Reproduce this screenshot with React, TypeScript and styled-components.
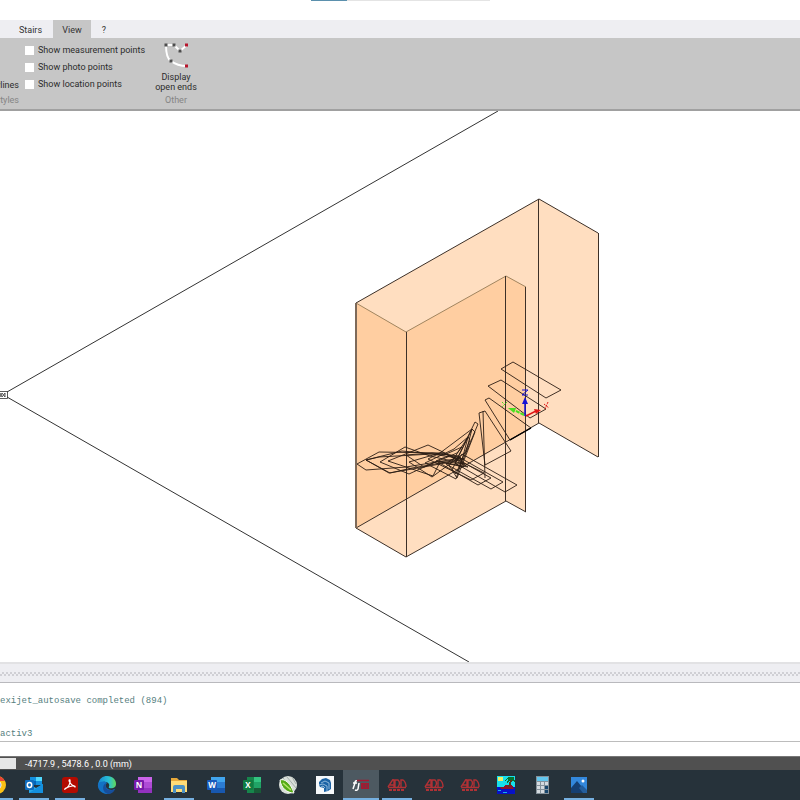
import React from 'react';
import styled, { createGlobalStyle } from 'styled-components';

const GlobalStyle = createGlobalStyle`
  * { box-sizing: border-box; }
  body { margin: 0; background: #fff; font-family: Roboto, "Open Sans", sans-serif; }
`;

const Page = styled.div`
  display: flex;
  flex-direction: column;
  min-height: 100vh;
  overflow: hidden;
`;

const TopStrip = styled.div`
  display: flex;
  height: 20px;
  padding-left: 311px;
`;

const Segment = styled.div<{ $active?: boolean }>`
  flex: none;
  width: ${p => (p.$active ? 36 : 143)}px;
  height: 1px;
  background: ${p => (p.$active ? '#5b90ad' : '#e4e4e4')};
`;

const Tabs = styled.nav`
  display: flex;
  height: 18px;
  padding-left: 8px;
  background: #eeeef2;
`;

const Tab = styled.button<{ $active?: boolean }>`
  border: 0;
  padding: 2px 0 0;
  width: ${p => (p.$active ? 38 : 45)}px;
  background: ${p => (p.$active ? '#c6c6c6' : 'transparent')};
  color: #333;
  font: 9px/16px Roboto, sans-serif;
`;

const HelpTab = styled(Tab)`
  width: 26px;
`;

const Ribbon = styled.section`
  display: flex;
  height: 73px;
  background: #c6c6c6;
  border-bottom: 2px solid #a0a0a0;
`;

const StyleGroup = styled.div`
  display: flex;
  flex-direction: column;
  width: 150px;
  padding-top: 4px;
`;

const OptionRow = styled.div`
  display: flex;
  align-items: center;
  height: 17px;
  color: #2c2c2c;
`;

const Clipped = styled.span`
  display: flex;
  flex: none;
  justify-content: flex-end;
  width: 19px;
  margin-right: 6px;
  white-space: nowrap;
  font-size: 9px;
`;

const Option = styled.label`
  display: flex;
  align-items: center;
  gap: 4px;
  font-size: 9px;
  line-height: 17px;
  white-space: nowrap;
`;

const Check = styled.input`
  appearance: none;
  width: 9px;
  height: 9px;
  margin: 0;
  background: #fff;
  &:checked { background: #4596cb; }
`;

const GroupName = styled.div`
  display: flex;
  font-size: 9px;
  line-height: 15px;
  color: #858585;
`;

const OtherGroup = styled.div`
  display: flex;
  flex-direction: column;
  align-items: center;
  width: 52px;
  padding-top: 4px;
`;

const ToolButton = styled.button`
  display: flex;
  flex-direction: column;
  align-items: center;
  height: 51px;
  border: 0;
  padding: 0;
  background: transparent;
  font: 9px/10px Roboto, sans-serif;
  color: #2c2c2c;
  white-space: nowrap;
`;

const Viewport = styled.main`
  display: flex;
  flex: 1 0 551px;
  height: 551px;
  background: #fff;
  svg { display: block; width: 100%; height: 100%; }
`;

const Splitter = styled.div`
  height: 21px;
  padding: 8px 0;
  background: #eeeef2;
  border-top: 2px solid #e2e2e4;
  border-bottom: 1px solid #b9b9bd;
`;

const Grip = styled.div`
  height: 4px;
  background-image:
    conic-gradient(#d0d0d5 25%, transparent 0 50%, #d0d0d5 0 75%, transparent 0);
  background-size: 4px 4px;
`;

const Console = styled.section`
  display: flex;
  flex-direction: column;
  gap: 22px;
  height: 59px;
  padding-top: 13px;
  border-bottom: 1px solid #bcbcbc;
  font: 9px/11px "Liberation Mono", monospace;
  color: #568080;
`;

const CommandInput = styled.input`
  width: 100%;
  height: 14px;
  border: 0;
  padding: 0 4px;
  background: #fff;
  font: 9px/11px "Liberation Mono", monospace;
  outline: none;
`;

const StatusBar = styled.footer`
  display: flex;
  align-items: center;
  gap: 9px;
  height: 14px;
  background: #505050;
  border-top: 1px solid #777;
  font-size: 9px;
  line-height: 12px;
  color: #fff;
`;

const StatusField = styled.div`
  width: 16px;
  height: 11px;
  background: #e6e6e6;
`;

const Taskbar = styled.nav`
  height: 30px;
  overflow: hidden;
  background: #26323a;
`;

const TaskList = styled.div`
  display: grid;
  grid-template-columns: 16px repeat(16, 1fr);
  width: 597px;
  height: 30px;
`;

const TaskButton = styled.button<{ $open?: boolean; $active?: boolean }>`
  display: flex;
  justify-content: center;
  min-width: 0;
  padding: 5px 0 0;
  border: 0;
  background:
    linear-gradient(${p => (p.$open ? '#76b0e0, #76b0e0' : 'transparent, transparent')})
    center bottom / ${p => (p.$active ? '100%' : '30px')} 2px no-repeat
    ${p => (p.$active ? '#4d5961' : 'transparent')};
  svg { flex: none; display: block; width: 20px; height: 20px; }
`;

const EdgeTaskButton = styled(TaskButton)`
  justify-content: flex-end;
  padding-right: 9px;
  background-position: -17px bottom;
`;

function OpenEndsIcon() {
  return (
    <svg width="28" height="30" viewBox="0 0 28 30" aria-hidden="true">
      <path d="M4 3C4 12 5 17 9 19C14 23 19 24 25 24M4 3H12L18 9L25 3" fill="none" stroke="#fff" strokeWidth="2" />
      {[[4, 3], [12, 3], [18, 9], [9, 19]].map(([x, y]) => (
        <rect key={x} x={x - 1.5} y={y - 1.5} width="3" height="3" fill="#4d4d4d" />
      ))}
      <rect x="23" y="1.500" width="3" height="3" fill="#b7152c" />
      <rect x="23" y="22.500" width="3" height="3" fill="#b7152c" />
    </svg>
  );
}

const walls = [
  '356,303 539,199 539,423 356,528',
  '539,199 598,233 598,457 539,423',
  '356,303 406,332 406,557 356,528',
  '406,332 506,276 506,501 406,557',
  '506,276 526,287 526,512 506,501',
];

const treads = [
  '501,369 513,362 561,390 546,398',
  '488,386 501,380 546,409 530,418',
  '485,400 489,398 531,428 510,440',
  '479,413 485,411 511,451 485,465',
  '475,422 478,424 460,467 455,463',
  '472,429 475,432 457,478 452,470',
  '468,437 470,440 456,474 449,466',
  '357,464 366,470 406,467 461,458 440,453 379,452',
  '366,460 390,473 412,468 464,459 432,454 379,457',
  '380,462 405,447 430,456 465,464 437,461 409,474',
  '388,461 428,445 445,453 468,467 440,462 433,476',
  '409,462 440,453 472,429 466,452 432,477',
  '425,463 454,449 468,437 463,456 456,479',
  '366,460 402,451 444,455 462,447 457,453 424,467 389,473',
  '406,455 432,453 459,456 464,467 445,463 424,467',
  '462,454 517,485 505,492 455,463',
  '457,456 503,482 491,489 446,464',
  '450,455 491,478 478,485 436,461',
  '442,452 484,473 471,480 428,459',
];

function Drawing() {
  return (
    <svg viewBox="0 111 800 551" preserveAspectRatio="xMidYMid slice" role="img" aria-label="3D stair model">
      <g fill="none" stroke="#333" strokeWidth="1">
        <path d="M498 111L7 392M7 397L469 662" />
        <path d="M-1 391.500H7.500V398.500H-1M0 393L2 397L5 393V397L2 393L0 397" strokeWidth=".8" />
      </g>
      <g fill="#ffbe82" fillOpacity=".5" stroke="none">
        {walls.map(p => <polygon key={p} points={p} />)}
      </g>
      <g fill="none" strokeWidth="1">
        <path d="M356 303L406 332L506 276L526 287" stroke="#a1855f" />
        <path d="M356 303L539 199L598 233M598 457L539 423L356 528L406 557L506 501L526 512" stroke="#3c3028" />
        <path d="M598.500 233V457M538.500 199V423M525.500 287V512M505.500 276V501M406.500 332V557" stroke="#3c3028" />
        <path d="M356 303V528" stroke="#7d6a5a" strokeWidth="2" />
      </g>
      <g fill="none" stroke="#2b1d14" strokeWidth=".9">
        {treads.map(p => <polygon key={p} points={p} />)}
        <path d="M483 411L485 478" />
        <path d="M510 440L531 428" stroke="#000" strokeWidth="1.200" />
      </g>
      <g fill="none" strokeWidth="1.500">
        <path d="M525 416V402" stroke="#1511d6" />
        <path d="M525 397L522 404H528Z" fill="#1511d6" stroke="none" />
        <path d="M522 390H528L522 395H528" stroke="#1511d6" strokeWidth="1" />
        <path d="M526 416L536 411" stroke="#e11616" />
        <path d="M541 410L534 409L536 414Z" fill="#e11616" stroke="none" />
        <path d="M544 404L549 408M548 402L545 409" stroke="#e11616" strokeWidth="1" strokeDasharray="2 1" />
        <path d="M524 415L512 409" stroke="#48df20" strokeWidth="2" strokeDasharray="4 1" />
        <path d="M508 408L516 408L514 413Z" fill="#48df20" stroke="none" />
        <path d="M502 402L505 405M507 402L502 407" stroke="#48df20" strokeWidth="1" strokeDasharray="2 1" />
      </g>
    </svg>
  );
}

function Chrome() {
  return (
    <svg viewBox="0 0 20 20" aria-hidden="true">
      <circle cx="10" cy="10" r="9" fill="#fbc116" />
      <path d="M2.200 5.500A9 9 0 0 1 18 6H10L6 12Z" fill="#e84335" />
      <path d="M2.200 5.500L7 13L11 14L9 19A9 9 0 0 1 2.200 5.500Z" fill="#34a853" />
      <circle cx="10" cy="10" r="4.500" fill="#fff" />
      <circle cx="10" cy="10" r="3.500" fill="#4285f4" />
    </svg>
  );
}

function Outlook() {
  return (
    <svg viewBox="0 0 20 20" aria-hidden="true">
      <path d="M6 2H18V10H6Z" fill="#1490df" />
      <path d="M12 2H18V6H12Z" fill="#50d9ff" />
      <path d="M6 6H12V10H6Z" fill="#0364b8" />
      <path d="M5 9L12 13L19 9V18H5Z" fill="#28a8ea" />
      <path d="M5 18L19 9V18Z" fill="#1490df" />
      <rect x="1" y="5" width="9" height="10" rx="1" fill="#0f6cbd" />
      <ellipse cx="5.500" cy="10" rx="2.200" ry="2.500" fill="none" stroke="#fff" strokeWidth="1.500" />
    </svg>
  );
}

function Acrobat() {
  return (
    <svg viewBox="0 0 20 20" aria-hidden="true">
      <rect x="2" y="2" width="16" height="16" rx="3" fill="#b30b00" />
      <path d="M5 14C8 13 11 8 10 5C8 4 9 9 15 12C16 10 10 11 6 13C4 14 5 15 5 14Z" fill="none" stroke="#fff" strokeWidth="1.200" />
    </svg>
  );
}

function Edge() {
  return (
    <svg viewBox="0 0 20 20" aria-hidden="true">
      <defs>
        <linearGradient id="edge" x1="0" x2="1">
          <stop stopColor="#1685d5" />
          <stop offset=".6" stopColor="#29c1d6" />
          <stop offset="1" stopColor="#62d957" />
        </linearGradient>
      </defs>
      <path d="M1 10C2 3 6 1 10 1C16 1 19 5 19 9C19 13 15 14 12 13C11 12 13 11 12 9C10 6 4 6 1 10Z" fill="url(#edge)" />
      <path d="M1 9C3 6 8 6 10 8C7 10 9 15 15 15L18 14C16 18 12 19 9 19C4 18 0 14 1 9Z" fill="#1372c4" />
      <path d="M9 8C4 11 6 18 11 19C14 19 17 17 18 14C12 17 7 14 9 8Z" fill="#174e9b" />
    </svg>
  );
}

const officeTones = {
  N: ['#7719aa', '#ca64ea', '#ae4bd5', '#9332bf'],
  W: ['#185abd', '#41a5ee', '#2b7cd3', '#1858af'],
  X: ['#107c41', '#33c481', '#21a366', '#185c37'],
};

function Office({ letter }: { letter: 'N' | 'W' | 'X' }) {
  const [badge, top, middle, bottom] = officeTones[letter];
  return (
    <svg viewBox="0 0 20 20" aria-hidden="true">
      <rect x="5" y="2" width="14" height="16" rx="1" fill={middle} />
      <path d="M5 2H19V7H5Z" fill={top} />
      <path d="M5 13H19V18H5Z" fill={bottom} />
      {letter === 'X' && <path d="M5 2H12V18H5Z" fill="#17864c" />}
      <rect x="1" y="5" width="10" height="10" rx="1" fill={badge} />
      <text x="6" y="13" textAnchor="middle" fill="#fff" fontFamily="Open Sans, sans-serif" fontSize="8" fontWeight="700">{letter}</text>
    </svg>
  );
}

function Folder() {
  return (
    <svg viewBox="0 0 20 20" aria-hidden="true">
      <path d="M2 3H8L10 5H18V17H2Z" fill="#e7a93a" />
      <path d="M2 6H18V17H2Z" fill="#ffdc77" />
      <path d="M4 18V12Q4 10 6 10H14Q16 10 16 12V18H13V14H7V18Z" fill="#4b91c4" />
    </svg>
  );
}

function Corel() {
  return (
    <svg viewBox="0 0 20 20" aria-hidden="true">
      <circle cx="10" cy="10" r="9" fill="#d9dfd9" />
      <path d="M9 2L18 13M14 2L18 9M5 3L16 16" stroke="#a5b0ac" />
      <path d="M2 5C7 3 13 9 16 18C9 18 3 13 2 5Z" fill="#56aa18" stroke="#fff" />
      <path d="M5 8L13 15" stroke="#b4e66a" strokeWidth="1.500" />
    </svg>
  );
}

function SketchUp() {
  return (
    <svg viewBox="0 0 20 20" aria-hidden="true">
      <rect x="1" y="1" width="18" height="18" fill="#f5f8fa" />
      <path d="M4 7L7 4L11 3L15 5L16 8V14L13 16L9 17V13L5 12L4 10Z" fill="#1c63a5" />
      <path d="M6 8L10 6L14 8V14M4 10L8 9L12 11V16M6 12L8 11L10 13" fill="none" stroke="#a9cce6" strokeWidth=".8" />
    </svg>
  );
}

function Flexijet() {
  return (
    <svg viewBox="0 0 20 20" aria-hidden="true">
      <path d="M6 6Q4 5 4 8L2 14M2 8H6M8 8L7 14Q6 16 4 15" fill="none" stroke="#fff" strokeWidth="1.500" />
      <path d="M6 5.500H18" stroke="#a71931" strokeWidth="1.500" />
      <path d="M10 8H18V14H10Z" fill="#a71931" />
      <path d="M12 10H14M12 12H14M16 9V13" stroke="#604049" />
    </svg>
  );
}

function StairCon() {
  return (
    <svg viewBox="0 0 20 20" aria-hidden="true">
      <path d="M1 12L5 6Q6 4 7 5V12M2 10H7M8 12V5H11Q14 8 11 12M14 12V5H16Q19 7 19 12M1 12.500H19" fill="none" stroke="#b03135" strokeWidth="1.400" />
      <path d="M2 15H18" stroke="#b03135" strokeWidth="2" strokeDasharray="3 1" />
    </svg>
  );
}

function Island() {
  return (
    <svg viewBox="0 0 20 20" aria-hidden="true" shapeRendering="crispEdges">
      <path d="M1 1H19V19H1Z" fill="#18dfec" />
      <path d="M1 12H19V19H1Z" fill="#0712c7" />
      <path d="M2 2H7V6H2Z" fill="#e9ef69" />
      <path d="M3 12H7L10 10H16L18 14H5Z" fill="#891429" />
      <path d="M14 5H16L14 12H12Z" fill="#59391c" />
      <path d="M9 6L12 2H18L19 7L15 5L11 8L12 4Z" fill="#08732e" />
      <path d="M2 15H5M7 17H11" fill="none" stroke="#16afe9" />
    </svg>
  );
}

function Calculator() {
  return (
    <svg viewBox="0 0 20 20" aria-hidden="true">
      <rect x="3" y="1" width="13" height="18" fill="#85929b" />
      <path d="M4 2H15V6H4Z" fill="#63c7ef" />
      {[7, 11, 15].map(y => [4, 8, 12].map(x => (
        <rect key={`${x}-${y}`} x={x} y={y} width="3" height="3" fill={x === 12 && y > 7 ? '#17466d' : '#d5dbe0'} />
      )))}
    </svg>
  );
}

function Photos() {
  return (
    <svg viewBox="0 0 20 20" aria-hidden="true">
      <path d="M2 2H18V18H2Z" fill="#3388dc" />
      <path d="M2 13L8 6L18 18H2Z" fill="#153f72" />
      <path d="M10 13L13 10L18 15V18H14Z" fill="#245e9d" />
      <circle cx="14" cy="6" r="1.500" fill="#fff" />
    </svg>
  );
}

const apps = [
  { name: 'Outlook', icon: <Outlook />, open: true },
  { name: 'Acrobat', icon: <Acrobat />, open: true },
  { name: 'Edge', icon: <Edge /> },
  { name: 'OneNote', icon: <Office letter="N" /> },
  { name: 'Explorer', icon: <Folder />, open: true },
  { name: 'Word', icon: <Office letter="W" /> },
  { name: 'Excel', icon: <Office letter="X" /> },
  { name: 'CorelDRAW', icon: <Corel /> },
  { name: 'SketchUp', icon: <SketchUp /> },
  { name: 'Flexijet', icon: <Flexijet />, open: true, active: true },
  { name: 'Stairs 1', icon: <StairCon />, open: true },
  { name: 'Stairs 2', icon: <StairCon /> },
  { name: 'Stairs 3', icon: <StairCon /> },
  { name: 'Island', icon: <Island /> },
  { name: 'Calculator', icon: <Calculator /> },
  { name: 'Photos', icon: <Photos />, open: true },
];

export default function App() {
  return (
    <Page>
      <GlobalStyle />
      <TopStrip><Segment $active /><Segment /></TopStrip>
      <Tabs>
        <Tab>Stairs</Tab>
        <Tab $active>View</Tab>
        <HelpTab>?</HelpTab>
      </Tabs>
      <Ribbon>
        <StyleGroup>
          {['measurement', 'photo', 'location'].map((kind, i) => (
            <OptionRow key={kind}>
              <Clipped>{i === 2 ? 'ylines' : ''}</Clipped>
              <Option><Check type="checkbox" /><span>Show {kind} points</span></Option>
            </OptionRow>
          ))}
          <GroupName><Clipped>styles</Clipped></GroupName>
        </StyleGroup>
        <OtherGroup>
          <ToolButton><OpenEndsIcon /><span>Display</span><span>open ends</span></ToolButton>
          <GroupName>Other</GroupName>
        </OtherGroup>
      </Ribbon>
      <Viewport><Drawing /></Viewport>
      <Splitter><Grip /></Splitter>
      <Console>
        <div>exijet_autosave completed (894)</div>
        <div>activ3</div>
      </Console>
      <CommandInput aria-label="Command" />
      <StatusBar><StatusField />-4717.9 , 5478.6 , 0.0 (mm)</StatusBar>
      <Taskbar>
        <TaskList>
          <EdgeTaskButton $open aria-label="Chrome"><Chrome /></EdgeTaskButton>
          {apps.map(app => (
            <TaskButton key={app.name} $open={app.open} $active={app.active} aria-label={app.name}>{app.icon}</TaskButton>
          ))}
        </TaskList>
      </Taskbar>
    </Page>
  );
}
